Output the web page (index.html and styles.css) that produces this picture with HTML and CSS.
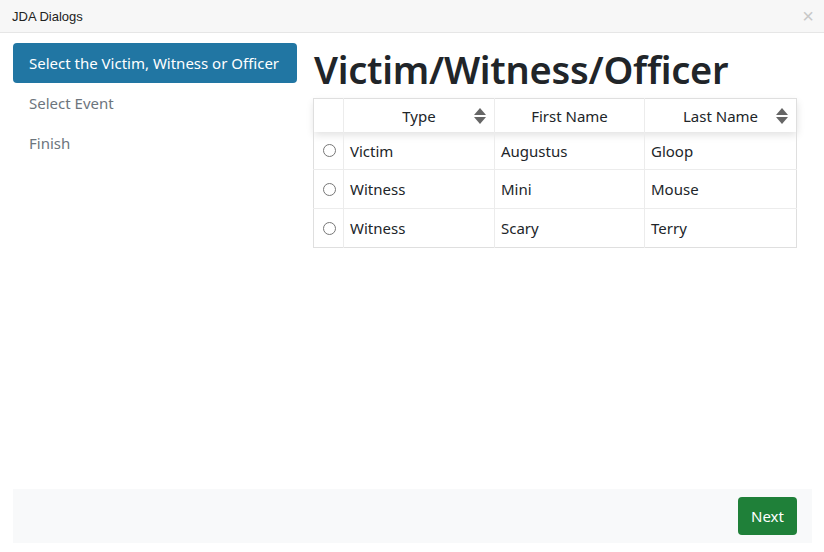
FILE: index.html
```html
<!DOCTYPE html>
<html>
<head>
<meta charset="utf-8">
<link rel="stylesheet" href="styles.css">
</head>
<body>
<div class="dialog">
  <div class="titlebar">
    <span class="title">JDA Dialogs</span>
    <span class="close">×</span>
  </div>
  <div class="content">
    <div class="steps">
      <div class="step active">Select the Victim, Witness or Officer</div>
      <div class="step">Select Event</div>
      <div class="step">Finish</div>
    </div>
    <div class="main">
      <h1 class="heading">Victim/Witness/Officer</h1>
      <table class="grid">
        <colgroup>
          <col class="c-sel">
          <col class="c-type">
          <col class="c-first">
          <col class="c-last">
        </colgroup>
        <thead>
          <tr>
            <th class="sel"></th>
            <th class="sortable">Type<span class="sort"></span></th>
            <th>First Name</th>
            <th class="sortable">Last Name<span class="sort"></span></th>
          </tr>
        </thead>
        <tbody>
          <tr><td class="sel"><span class="radio"></span></td><td>Victim</td><td>Augustus</td><td>Gloop</td></tr>
          <tr><td class="sel"><span class="radio"></span></td><td>Witness</td><td>Mini</td><td>Mouse</td></tr>
          <tr><td class="sel"><span class="radio"></span></td><td>Witness</td><td>Scary</td><td>Terry</td></tr>
        </tbody>
      </table>
    </div>
  </div>
  <div class="footer">
    <button class="next">Next</button>
  </div>
</div>
</body>
</html>
```
FILE: styles.css
```css
html, body {
  margin: 0;
  padding: 0;
  background: #fff;
}
body {
  font-family: "Noto Sans", "Open Sans", sans-serif;
  color: #212529;
}
.dialog {
  width: 824px;
  height: 552px;
  display: flex;
  flex-direction: column;
}
.titlebar {
  height: 33px;
  background: #f7f7f7;
  border-bottom: 1px solid #e6e6e6;
  display: flex;
  align-items: center;
  justify-content: space-between;
  padding: 0 10px 0 12px;
  box-sizing: border-box;
  flex: none;
}
.title {
  font-family: "Liberation Sans", Arial, sans-serif;
  font-size: 13px;
  color: #222;
}
.close {
  font-family: "Liberation Sans", Arial, sans-serif;
  font-size: 20px;
  color: #c8c8c8;
  line-height: 1;
}
.content {
  flex: 1;
  display: flex;
  padding: 10px 13px 0 13px;
  gap: 16px;
}
.steps {
  width: 284px;
  flex: none;
  display: flex;
  flex-direction: column;
}
.step {
  height: 40px;
  line-height: 40px;
  padding-left: 16px;
  font-size: 15px;
  color: #6c757d;
  border-radius: 4px;
  white-space: nowrap;
}
.step.active {
  background: #2176a3;
  color: #fff;
}
.main {
  flex: 1;
  padding-right: 14px;
}
.heading {
  margin: 3px 0 6px 1px;
  font-size: 38px;
  font-weight: 600;
  line-height: 46px;
  color: #212529;
  letter-spacing: -0.25px;
}
.grid {
  width: 483px;
  table-layout: fixed;
  border-collapse: collapse;
  border: 1px solid #dfdfdf;
  font-size: 15px;
}
.c-sel { width: 30px; }
.c-type { width: 151px; }
.c-first { width: 150px; }
.c-last { width: 152px; }
.grid th, .grid td {
  border-left: 1px solid #ececec;
  padding: 0;
  text-align: left;
}
.grid thead tr {
  box-shadow: 0 3px 8px rgba(0,0,0,0.12);
}
.grid th {
  height: 33px;
  font-weight: 400;
  text-align: center;
  position: relative;
  color: #212529;
}
.grid th.sel, .grid td.sel {
  border-left: none;
}
.sort {
  position: absolute;
  right: 8px;
  top: 9px;
  width: 12px;
  height: 16px;
}
.sort::before, .sort::after {
  content: "";
  position: absolute;
  left: 0;
  border-left: 6px solid transparent;
  border-right: 6px solid transparent;
}
.sort::before {
  top: 0;
  border-bottom: 7px solid #666;
}
.sort::after {
  top: 9px;
  border-top: 7px solid #666;
}
.grid tbody td {
  height: 38px;
  border-top: 1px solid #ececec;
  padding-left: 6px;
}
.grid tbody tr:first-child td {
  border-top: none;
  height: 37px;
}
.grid tbody td.sel {
  padding-left: 9px;
}
.radio {
  display: block;
  width: 11px;
  height: 11px;
  border: 1px solid #777;
  border-radius: 50%;
  box-sizing: content-box;
}
.footer {
  flex: none;
  margin: 0 12px 9px 13px;
  height: 54px;
  background: #f8f9fa;
  display: flex;
  align-items: center;
  justify-content: flex-end;
  padding-right: 15px;
}
.next {
  font-family: "Noto Sans", "Open Sans", sans-serif;
  font-size: 15px;
  color: #fff;
  background: #1f8039;
  border: none;
  border-radius: 4px;
  width: 59px;
  height: 38px;
  padding: 0;
}
```
